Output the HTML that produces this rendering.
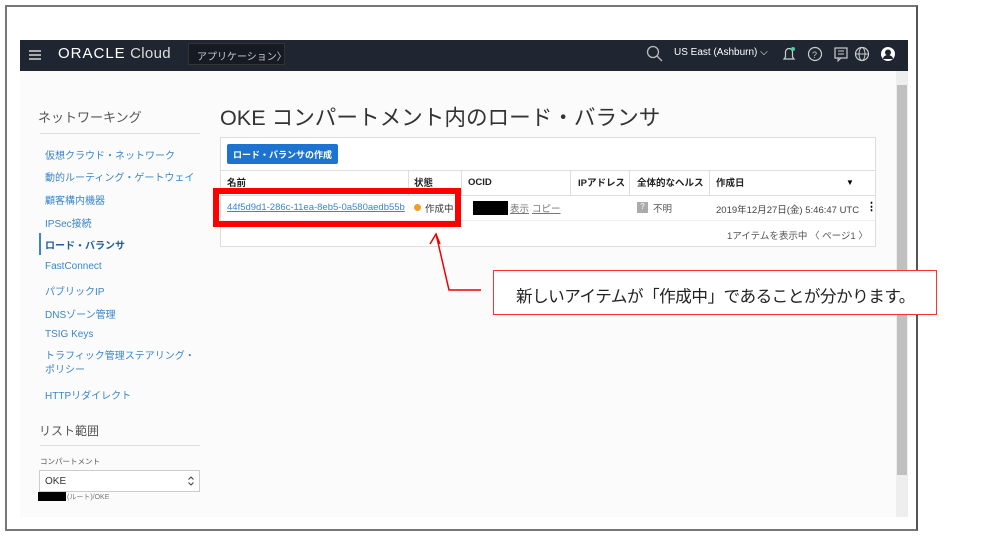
<!DOCTYPE html>
<html><head><meta charset="utf-8"><style>
*{margin:0;padding:0;box-sizing:border-box}
body{width:1000px;height:537px;background:#fff;position:relative;overflow:hidden;font-family:"Liberation Sans","Noto Sans CJK JP",sans-serif}
.a{position:absolute;white-space:nowrap}
.frame{left:5px;top:5px;width:913px;height:526px;border:2px solid #777;border-right-color:#555}
.hdr{left:20px;top:40px;width:888px;height:31px;background:#1f2631}
.content{left:20px;top:71px;width:876px;height:446px;background:#fcfbfb}
.nav{color:#3a86c8;font-size:10px}
.card{left:220px;top:137px;width:656px;height:110px;border:1px solid #ddd;background:#fff}
.th{font-size:9.5px;font-weight:bold;color:#222;line-height:12px}
.vl{position:absolute;top:170px;height:25px;width:1px;background:#ddd}
</style></head><body>
<div class="a frame"></div>
<div class="a hdr"></div>
<div class="a" style="left:29px;top:50px;width:12px;height:1.5px;background:#aaa;box-shadow:0 4px 0 #aaa,0 8px 0 #aaa"></div>
<div class="a" style="left:58px;top:45px;color:#fff;font-size:15px;letter-spacing:0.3px"><b style="font-weight:normal;letter-spacing:1px">ORACLE</b> <span style="color:#ddd">Cloud</span></div>
<div class="a" style="left:188px;top:43px;width:97px;height:22px;background:#161b23;border:1px solid #333;color:#ccc;font-size:10px;padding:4px 8px">アプリケーション〉</div>
<svg class="a" style="left:646px;top:45px" width="18" height="18"><circle cx="7" cy="7" r="5.5" fill="none" stroke="#bbb" stroke-width="1.3"/><line x1="11" y1="11" x2="16" y2="16" stroke="#bbb" stroke-width="1.3"/></svg>
<div class="a" style="left:674px;top:47px;color:#fff;font-size:10px">US East (Ashburn) ⌵</div>
<svg class="a" style="left:780px;top:44px" width="120" height="20">
<path d="M4 15h10l-1.5-2V8a3.5 3.5 0 0 0-7 0v5z" fill="none" stroke="#ccc" stroke-width="1.2"/><circle cx="13" cy="5" r="2" fill="#3dd6a0"/>
<circle cx="35" cy="10" r="6.5" fill="none" stroke="#ccc" stroke-width="1.2"/><text x="32" y="14" fill="#ccc" font-size="9" font-family="Liberation Sans">?</text>
<rect x="55" y="4" width="12" height="10" fill="none" stroke="#ccc" stroke-width="1.2"/><path d="M58 14v3l3-3" fill="none" stroke="#ccc"/><path d="M58 7h6M58 10h6" stroke="#ccc"/>
<circle cx="82" cy="10" r="6.5" fill="none" stroke="#ccc" stroke-width="1.2"/><ellipse cx="82" cy="10" rx="3" ry="6.5" fill="none" stroke="#ccc"/><path d="M75.5 10h13" stroke="#ccc"/>
<circle cx="108" cy="10" r="7" fill="#fff"/><circle cx="108" cy="8.5" r="3" fill="#1f2631"/><path d="M103 15a5 4 0 0 1 10 0" fill="#1f2631"/>
</svg>
<div class="a content"></div>
<div class="a" style="left:896px;top:71px;width:12px;height:446px;background:#eee"></div>
<div class="a" style="left:897px;top:85px;width:10px;height:390px;background:#c0c0c0"></div>
<div class="a" style="left:38px;top:107px;font-size:13px;color:#555">ネットワーキング</div>
<div class="a" style="left:40px;top:133px;width:160px;height:1px;background:#ddd"></div>
<div class="a nav" style="left:45px;top:147px">仮想クラウド・ネットワーク</div>
<div class="a nav" style="left:45px;top:169px">動的ルーティング・ゲートウェイ</div>
<div class="a nav" style="left:45px;top:192px">顧客構内機器</div>
<div class="a nav" style="left:45px;top:215px">IPSec接続</div>
<div class="a" style="left:39px;top:233px;width:2px;height:22px;background:#3a86c8"></div>
<div class="a nav" style="left:45px;top:237px;color:#1f5f9a;font-weight:bold">ロード・バランサ</div>
<div class="a nav" style="left:45px;top:261px">FastConnect</div>
<div class="a nav" style="left:45px;top:283px">パブリックIP</div>
<div class="a nav" style="left:45px;top:306px">DNSゾーン管理</div>
<div class="a nav" style="left:45px;top:329px">TSIG Keys</div>
<div class="a nav" style="left:45px;top:350px;line-height:14px">トラフィック管理ステアリング・<br>ポリシー</div>
<div class="a nav" style="left:45px;top:387px">HTTPリダイレクト</div>
<div class="a" style="left:39px;top:422px;font-size:12px;color:#555">リスト範囲</div>
<div class="a" style="left:40px;top:445px;width:160px;height:1px;background:#ddd"></div>
<div class="a" style="left:40px;top:456px;font-size:7.5px;color:#555">コンパートメント</div>
<div class="a" style="left:39px;top:470px;width:161px;height:22px;border:1px solid #ccc;background:#fff;font-size:10px;padding:5px 5px;color:#333">OKE</div>
<svg class="a" style="left:187px;top:475px" width="8" height="12"><path d="M1.5 4.5L4 2l2.5 2.5M1.5 7.5L4 10l2.5-2.5" fill="none" stroke="#444" stroke-width="1.1"/></svg>
<div class="a" style="left:38px;top:492px;width:28px;height:9px;background:#000"></div>
<div class="a" style="left:67px;top:492px;font-size:7px;color:#777">(ルート)/OKE</div>
<div class="a" style="left:220px;top:101px;font-size:21.6px;color:#333">OKE コンパートメント内のロード・バランサ</div>
<div class="a card"></div>
<div class="a" style="left:227px;top:144px;width:111px;height:20px;background:#1c74d0;border-radius:2px;color:#fff;font-size:9px;padding:4px 6px;font-weight:bold;overflow:hidden">ロード・バランサの作成</div>
<div class="a" style="left:221px;top:170px;width:654px;height:1px;background:#ddd"></div>
<div class="a" style="left:221px;top:195px;width:654px;height:1px;background:#ddd"></div>
<div class="a" style="left:221px;top:220px;width:654px;height:1px;background:#eee"></div>
<div class="vl" style="left:408px"></div><div class="vl" style="left:461px"></div><div class="vl" style="left:570px"></div><div class="vl" style="left:629px"></div><div class="vl" style="left:709px"></div>
<div class="a th" style="left:227px;top:178px">名前</div>
<div class="a th" style="left:414px;top:178px">状態</div>
<div class="a th" style="left:468px;top:177px">OCID</div>
<div class="a th" style="left:578px;top:178px">IPアドレス</div>
<div class="a th" style="left:637px;top:178px">全体的なヘルス</div>
<div class="a th" style="left:716px;top:178px">作成日</div>
<div class="a" style="left:846px;top:178px;font-size:8px">▼</div>
<div class="a" style="left:227px;top:202px;font-size:9.5px;color:#3a86c8;text-decoration:underline">44f5d9d1-286c-11ea-8eb5-0a580aedb55b</div>
<div class="a" style="left:414px;top:204px;width:7px;height:7px;border-radius:50%;background:#f0a020"></div>
<div class="a" style="left:425px;top:201px;font-size:9.5px;color:#333">作成中</div>
<div class="a" style="left:473px;top:201px;width:35px;height:14px;background:#000"></div>
<div class="a" style="left:510px;top:201px;font-size:9.5px;color:#777;text-decoration:underline">表示</div>
<div class="a" style="left:532px;top:201px;font-size:9.5px;color:#777;text-decoration:underline">コピー</div>
<div class="a" style="left:637px;top:202px;width:11px;height:11px;background:#aaa;color:#fff;font-size:8px;text-align:center">?</div>
<div class="a" style="left:653px;top:201px;font-size:9.5px;color:#555">不明</div>
<div class="a" style="left:716px;top:202px;font-size:9.5px;color:#444">2019年12月27日(金) 5:46:47 UTC</div>
<div class="a" style="left:866px;top:200px;font-size:11px;font-weight:bold">⋮</div>
<div class="a" style="left:727px;top:228px;font-size:9.5px;color:#555">1アイテムを表示中 〈 ページ1 〉</div>
<div class="a" style="left:213px;top:188px;width:248px;height:39px;border:6px solid #f00"></div>
<svg class="a" style="left:425px;top:230px" width="70" height="65"><path d="M11 4L24 60H56" fill="none" stroke="#e00" stroke-width="1.5"/><path d="M5 14L11 4L15 14" fill="none" stroke="#e00" stroke-width="1.5"/></svg>
<div class="a" style="left:493px;top:270px;width:444px;height:45px;border:1px solid #f33;background:#fff;font-size:16.6px;letter-spacing:-0.5px;color:#222;padding:12px 0 0 22px">新しいアイテムが「作成中」であることが分かります。</div>
</body></html>
